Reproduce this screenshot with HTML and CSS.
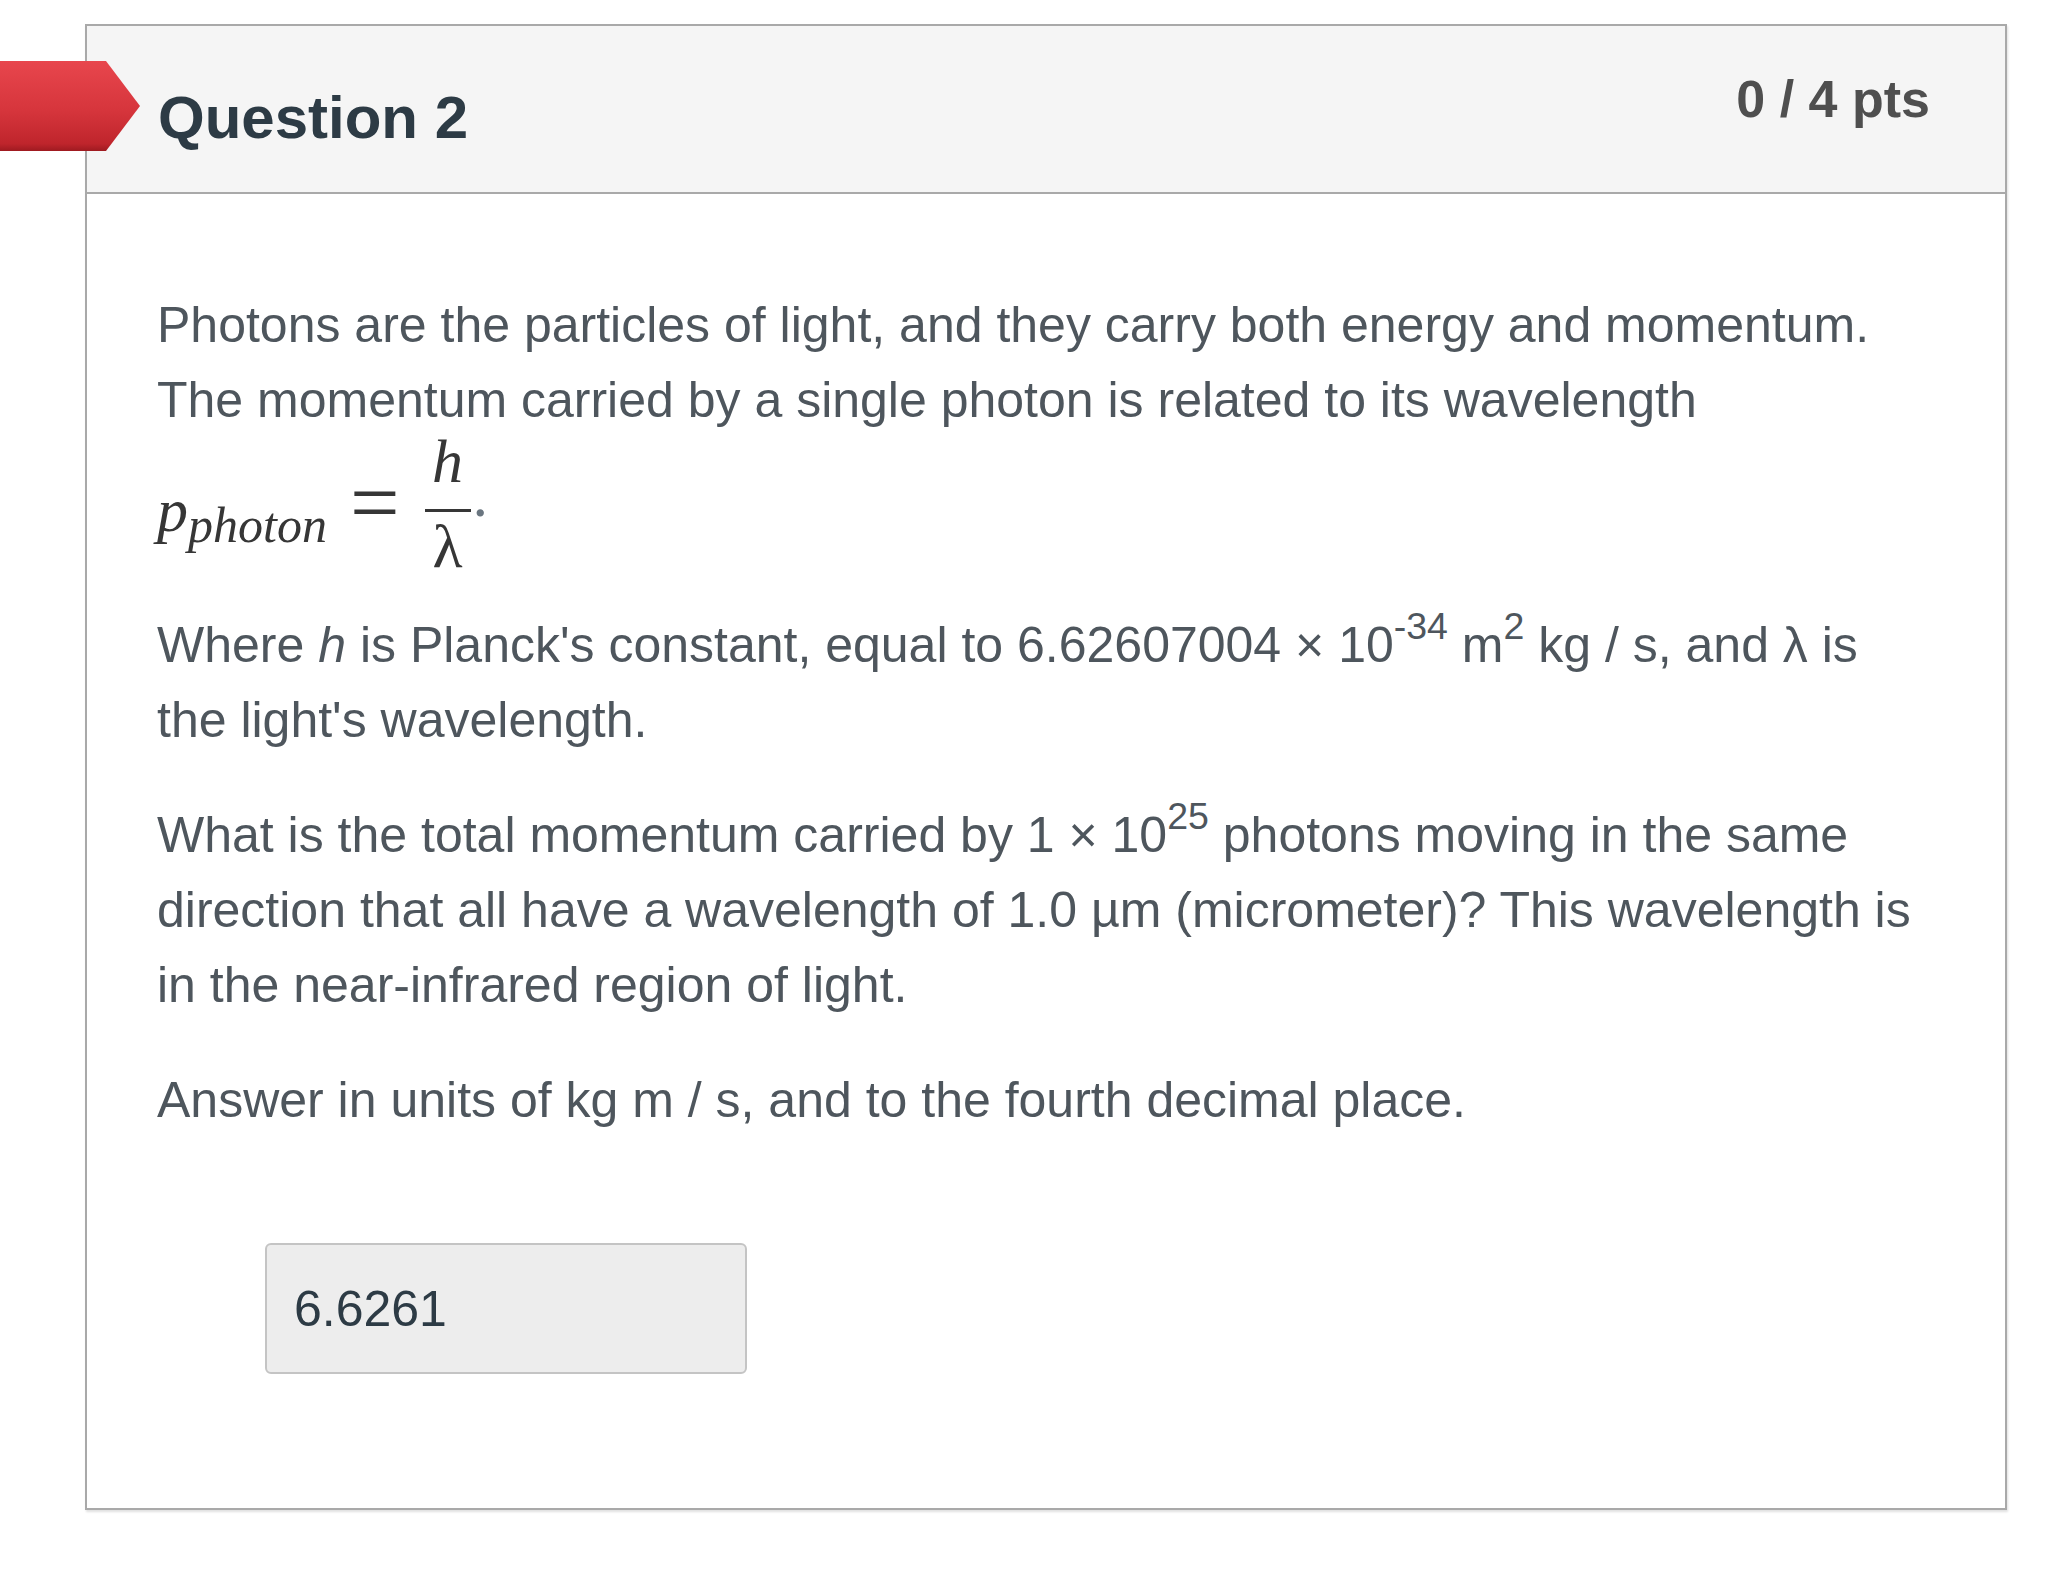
FILE: index.html
```html
<!DOCTYPE html>
<html lang="en">
<head>
<meta charset="utf-8">
<title>Question 2</title>
<link rel="stylesheet" href="styles.css">
</head>
<body>
<div class="page">
  <div class="question">
    <div class="flag"></div>
    <div class="q-header">
      <h2 class="q-title">Question 2</h2>
      <div class="q-points">0 / 4 pts</div>
    </div>
    <div class="q-body">
      <p>Photons are the particles of light, and they carry both energy and momentum. The momentum carried by a single photon is related to its wavelength</p>
      <div class="formula">
        <span class="mi">p<sub class="msub">photon</sub></span>
        <span class="mo">=</span>
        <span class="frac"><span class="num">h</span><span class="den">λ</span></span>
        <span class="mdot">.</span>
      </div>
      <p>Where <em>h</em> is Planck's constant, equal to 6.62607004 × 10<sup>-34</sup> m<sup>2</sup> kg / s, and λ is the light's wavelength.</p>
      <p>What is the total momentum carried by 1 × 10<sup>25</sup> photons moving in the same direction that all have a wavelength of 1.0 µm (micrometer)? This wavelength is in the near-infrared region of light.</p>
      <p>Answer in units of kg m / s, and to the fourth decimal place.</p>
      <div class="answer">
        <input class="answer-input" type="text" value="6.6261" readonly>
      </div>
    </div>
  </div>
</div>
</body>
</html>
```

FILE: styles.css
```css
html, body {
  margin: 0;
  padding: 0;
  background: #ffffff;
}

.page {
  padding: 24px 39px 60px 85px;
  font-family: "Liberation Sans", Arial, sans-serif;
}

.question {
  position: relative;
  border: 2px solid #a9a9a9;
  box-shadow: 1px 2px 2px rgba(0, 0, 0, 0.12);
  background: #ffffff;
}

.flag {
  position: absolute;
  left: -87px;
  top: 35px;
  width: 140px;
  height: 90px;
  background: linear-gradient(to bottom, #e8464d 0%, #d6353c 55%, #bf252c 92%, #9e1a20 100%);
  clip-path: polygon(0 0, 106px 0, 140px 50%, 106px 100%, 0 100%);
  z-index: 2;
}

.q-header {
  display: flex;
  justify-content: space-between;
  align-items: flex-start;
  height: 166px;
  padding: 0 75px 0 71px;
  background: #f5f5f5;
  border-bottom: 2px solid #a9a9a9;
}

.q-title {
  margin: 62px 0 0 0;
  font-size: 60px;
  line-height: 60px;
  font-weight: bold;
  color: #2d3b45;
}

.q-points {
  margin-top: 47px;
  font-size: 52px;
  line-height: 52px;
  font-weight: bold;
  color: #4f4f4f;
}

.q-body {
  padding: 94px 75px 134px 70px;
  font-size: 50px;
  line-height: 75px;
  color: #4e565d;
}

.q-body p {
  margin: 0 0 40px 0;
}

.q-body p:first-child {
  margin-bottom: 0;
}

.q-body em {
  font-style: italic;
}

.q-body sup {
  font-size: 0.75em;
  line-height: 0;
  vertical-align: 0.62em;
}

.formula {
  display: flex;
  align-items: center;
  height: 130px;
  margin-bottom: 40px;
  font-family: "Liberation Serif", "Times New Roman", serif;
  font-style: italic;
  font-size: 62px;
  line-height: 62px;
  color: #363636;
}

.mi {
  display: inline-block;
  margin-top: 13px;
}

.msub {
  font-size: 50px;
  line-height: 0;
  vertical-align: -11px;
}

.mo {
  font-style: normal;
  font-size: 88px;
  line-height: 62px;
  margin: 0 25px 0 23px;
}

.frac {
  display: inline-flex;
  flex-direction: column;
  align-items: center;
  width: 46px;
}

.num {
  display: block;
  padding-bottom: 17px;
  border-bottom: 3px solid #363636;
  width: 46px;
  text-align: center;
}

.den {
  display: block;
  padding-top: 3px;
  font-style: normal;
  text-align: center;
}

.mdot {
  font-style: normal;
  margin: 0 0 16px 2px;
  color: #6a7680;
}

.answer {
  margin: 105px 0 0 108px;
}

.answer-input {
  display: block;
  box-sizing: border-box;
  width: 482px;
  height: 131px;
  margin: 0;
  padding: 0 0 0 27px;
  border: 2px solid #c4c4c4;
  border-radius: 6px;
  background: #ededed;
  font-family: "Liberation Sans", Arial, sans-serif;
  font-size: 50px;
  color: #2d3b45;
  outline: none;
}
```
